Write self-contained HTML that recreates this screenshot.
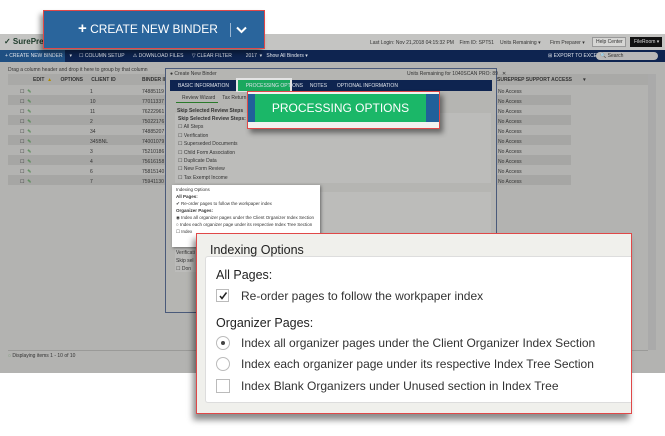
<!DOCTYPE html>
<html><head><meta charset="utf-8"><style>
*{margin:0;padding:0;box-sizing:border-box}
body{width:665px;height:436px;background:#fff;position:relative;overflow:hidden;font-family:"Liberation Sans",sans-serif;}
.a{position:absolute}
.t{font-size:5px;color:#333;white-space:nowrap}
.w{color:#dfe3ea}
.big{font-size:12px;color:#333;white-space:nowrap}
</style></head><body>
<div class="a" style="left:0;top:34px;width:665px;height:339px;background:#b3b3b1"></div>
<div class="a" style="left:0;top:34px;width:665px;height:16px;background:#c4c4c2"></div>
<div class="a t" style="left:4px;top:37px;font-size:8px;font-weight:bold;color:#1d3a2a">✓ SurePrep</div>
<div class="a t" style="left:370px;top:40px">Last Login: Nov 21,2018 04:15:32 PM &nbsp;&nbsp; Firm ID: SPT51</div>
<div class="a t" style="left:500px;top:40px">Units Remaining ▾</div>
<div class="a t" style="left:550px;top:40px">Firm Preparer ▾</div>
<div class="a" style="left:592px;top:37px;width:34px;height:10px;background:#d6d6d4;border:1px solid #999"></div>
<div class="a t" style="left:596px;top:39px">Help Center</div>
<div class="a" style="left:630px;top:37px;width:32px;height:10px;background:#111"></div>
<div class="a t" style="left:634px;top:39px;color:#ddd">FileRoom ▾</div>
<div class="a" style="left:0;top:50px;width:665px;height:12px;background:#0e2450"></div>
<div class="a" style="left:0;top:50px;width:65px;height:12px;background:#1f4f82"></div>
<div class="a t w" style="left:5px;top:53px">+ CREATE NEW BINDER &nbsp;&nbsp;&nbsp;&nbsp;▾ &nbsp;&nbsp;&nbsp; ☐ COLUMN SETUP &nbsp;&nbsp;&nbsp;&nbsp; ⚠ DOWNLOAD FILES &nbsp;&nbsp;&nbsp;&nbsp; ▽ CLEAR FILTER &nbsp;&nbsp;&nbsp;&nbsp;&nbsp;&nbsp;&nbsp;&nbsp; 2017 &nbsp;▾ &nbsp; Show All Binders ▾</div>
<div class="a t w" style="left:548px;top:53px">⊞ EXPORT TO EXCEL</div>
<div class="a" style="left:596px;top:52px;width:62px;height:8px;background:#b8b8b8;border-radius:4px"></div>
<div class="a t" style="left:600px;top:53px">🔍 Search</div>
<div class="a t" style="left:8px;top:67px">Drag a column header and drop it here to group by that column</div>
<div class="a" style="left:8px;top:74px;width:640px;height:11px;background:#a9a9a7"></div>
<div class="a t" style="left:33px;top:77px;font-weight:bold">EDIT &nbsp;<span style="color:#b08a00">▲</span> &nbsp;&nbsp;&nbsp;&nbsp;&nbsp;OPTIONS &nbsp;&nbsp;&nbsp;&nbsp; CLIENT ID</div>
<div class="a t" style="left:142px;top:77px;font-weight:bold">BINDER ID</div>
<div class="a t" style="left:497px;top:77px;font-weight:bold">SUREPREP SUPPORT ACCESS &nbsp;&nbsp;&nbsp;&nbsp;&nbsp;&nbsp;&nbsp;▾</div>
<div class="a" style="left:8px;top:95px;width:160px;height:10px;background:#a6a6a4"></div>
<div class="a" style="left:8px;top:115px;width:160px;height:10px;background:#a6a6a4"></div>
<div class="a" style="left:8px;top:135px;width:160px;height:10px;background:#a6a6a4"></div>
<div class="a" style="left:8px;top:155px;width:160px;height:10px;background:#a6a6a4"></div>
<div class="a" style="left:8px;top:175px;width:160px;height:10px;background:#a6a6a4"></div>
<div class="a" style="left:497px;top:95px;width:74px;height:10px;background:#a6a6a4"></div>
<div class="a" style="left:497px;top:115px;width:74px;height:10px;background:#a6a6a4"></div>
<div class="a" style="left:497px;top:135px;width:74px;height:10px;background:#a6a6a4"></div>
<div class="a" style="left:497px;top:155px;width:74px;height:10px;background:#a6a6a4"></div>
<div class="a" style="left:497px;top:175px;width:74px;height:10px;background:#a6a6a4"></div>
<div class="a t" style="left:20px;top:87px;line-height:10px">☐ &nbsp;<span style="color:#2a7a2a">✎</span><br>☐ &nbsp;<span style="color:#2a7a2a">✎</span><br>☐ &nbsp;<span style="color:#2a7a2a">✎</span><br>☐ &nbsp;<span style="color:#2a7a2a">✎</span><br>☐ &nbsp;<span style="color:#2a7a2a">✎</span><br>☐ &nbsp;<span style="color:#2a7a2a">✎</span><br>☐ &nbsp;<span style="color:#2a7a2a">✎</span><br>☐ &nbsp;<span style="color:#2a7a2a">✎</span><br>☐ &nbsp;<span style="color:#2a7a2a">✎</span><br>☐ &nbsp;<span style="color:#2a7a2a">✎</span></div>
<div class="a t" style="left:90px;top:87px;line-height:10px">1<br>10<br>11<br>2<br>34<br>345BNL<br>3<br>4<br>6<br>7</div>
<div class="a t" style="left:142px;top:87px;line-height:10px">74885119<br>77011337<br>76222961<br>75022176<br>74885207<br>74001079<br>75210186<br>75616158<br>75815140<br>75941130</div>
<div class="a t" style="left:498px;top:87px;line-height:10px">No Access<br>No Access<br>No Access<br>No Access<br>No Access<br>No Access<br>No Access<br>No Access<br>No Access<br>No Access</div>
<div class="a" style="left:8px;top:350px;width:640px;height:1px;background:#9a9a98"></div>
<div class="a t" style="left:8px;top:353px"><span style="color:#2a7a2a">◌</span> Displaying items 1 - 10 of 10</div>
<div class="a" style="left:648px;top:74px;width:8px;height:276px;background:#aaa"></div>
<div class="a" style="left:165px;top:68px;width:332px;height:245px;background:#b5b5b2;border:1px solid #4a5a7a"></div>
<div class="a t" style="left:170px;top:71px">● Create New Binder</div>
<div class="a t" style="left:407px;top:71px">Units Remaining for 1040SCAN PRO: 89 &nbsp;&nbsp;✕</div>
<div class="a" style="left:170px;top:80px;width:322px;height:11px;background:#0e2450"></div>
<div class="a" style="left:236px;top:78px;width:56px;height:14px;background:#e4e4e4"></div>
<div class="a" style="left:238px;top:80px;width:52px;height:11px;background:#1aa85e"></div>
<div class="a t w" style="left:178px;top:83px">BASIC INFORMATION &nbsp;&nbsp;&nbsp;&nbsp;&nbsp;&nbsp;&nbsp;&nbsp;&nbsp;&nbsp; PROCESSING OPTIONS &nbsp;&nbsp;&nbsp; NOTES &nbsp;&nbsp;&nbsp;&nbsp;&nbsp; OPTIONAL INFORMATION</div>
<div class="a t" style="left:182px;top:95px">Review Wizard &nbsp;&nbsp;&nbsp; Tax Return</div>
<div class="a" style="left:176px;top:102px;width:42px;height:1px;background:#2a7a2a"></div>
<div class="a t" style="left:177px;top:108px;font-weight:bold">Skip Selected Review Steps</div>
<div class="a" style="left:175px;top:113px;width:316px;height:70px;background:#bcbcba"></div>
<div class="a t" style="left:178px;top:115px;line-height:8.4px"><b>Skip Selected Review Steps:</b><br>☐ All Steps<br>☐ Verification<br>☐ Superseded Documents<br>☐ Child Form Association<br>☐ Duplicate Data<br>☐ New Form Review<br>☐ Tax Exempt Income</div>
<div class="a" style="left:175px;top:192px;width:316px;height:80px;background:#bcbcba"></div>
<div class="a" style="left:172px;top:185px;width:148px;height:62px;background:#fff;box-shadow:1px 1px 3px #666"></div>
<div class="a t" style="left:176px;top:186px;line-height:7px;font-size:4.5px">Indexing Options<br><b>All Pages:</b><br>✔ Re-order pages to follow the workpaper index<br><b>Organizer Pages:</b><br>◉ Index all organizer pages under the Client Organizer Index Section<br>○ Index each organizer page under its respective Index Tree Section<br>☐ Index</div>
<div class="a t" style="left:176px;top:249px;line-height:8px">Verificati<br>Skip sel<br>☐ Don</div>
<div class="a" style="left:247px;top:91px;width:193px;height:38px;background:#f2f2f0;border:1px solid #e04848;box-shadow:3px 4px 5px rgba(0,0,0,.45)"></div>
<div class="a" style="left:248px;top:94px;width:191px;height:28px;background:#21609a"></div>
<div class="a" style="left:255px;top:94px;width:171px;height:28px;background:#1bb768"></div>
<div class="a" style="left:255px;top:94px;width:171px;height:28px;color:#fff;font-size:12px;line-height:28px;text-align:center">PROCESSING OPTIONS</div>
<div class="a" style="left:43px;top:10px;width:222px;height:39px;background:#2a659c;border:1px solid #e04848;box-shadow:-3px 4px 5px rgba(0,0,0,.4)"></div>
<div class="a" style="left:78px;top:22px;color:#fff;font-size:12px;white-space:nowrap"><b style="font-size:15px;line-height:10px">+</b> CREATE NEW BINDER</div>
<div class="a" style="left:230px;top:23px;width:1px;height:14px;background:#9bb6d2"></div>
<svg class="a" style="left:236px;top:26px" width="11" height="8" viewBox="0 0 11 8"><path d="M1 1.5 L5.5 6 L10 1.5" stroke="#fff" stroke-width="2" fill="none"/></svg>
<div class="a" style="left:196px;top:233px;width:436px;height:181px;background:#f0f0ec;border:1px solid #e04848;box-shadow:-3px 6px 6px rgba(0,0,0,.45)"></div>
<div class="a" style="left:205px;top:256px;width:426px;height:147px;background:#fff;border:1px solid #ddd;border-right:none;border-radius:3px 0 0 3px"></div>
<div class="a" style="left:210px;top:243px;font-size:12.5px;color:#222">Indexing Options</div>
<div class="a" style="left:216px;top:268px;font-size:12.5px;color:#222">All Pages:</div>
<div class="a" style="left:216px;top:289px;width:13px;height:13px;border:1px solid #bbb"></div>
<svg class="a" style="left:218px;top:291px" width="10" height="10" viewBox="0 0 10 10"><path d="M2 5 L4 7.5 L8.5 1.5" stroke="#222" stroke-width="1.5" fill="none"/></svg>
<div class="a big" style="left:241px;top:289px">Re-order pages to follow the workpaper index</div>
<div class="a" style="left:216px;top:316px;font-size:12.5px;color:#222">Organizer Pages:</div>
<div class="a" style="left:216px;top:336px;width:14px;height:14px;border:1px solid #bbb;border-radius:50%"></div>
<div class="a" style="left:221px;top:341px;width:4px;height:4px;background:#444;border-radius:50%"></div>
<div class="a big" style="left:241px;top:336px">Index all organizer pages under the Client Organizer Index Section</div>
<div class="a" style="left:216px;top:357px;width:14px;height:14px;border:1px solid #bbb;border-radius:50%"></div>
<div class="a big" style="left:241px;top:357px">Index each organizer page under its respective Index Tree Section</div>
<div class="a" style="left:216px;top:379px;width:14px;height:14px;border:1px solid #bbb"></div>
<div class="a big" style="left:241px;top:379px">Index Blank Organizers under Unused section in Index Tree</div>
</body></html>
